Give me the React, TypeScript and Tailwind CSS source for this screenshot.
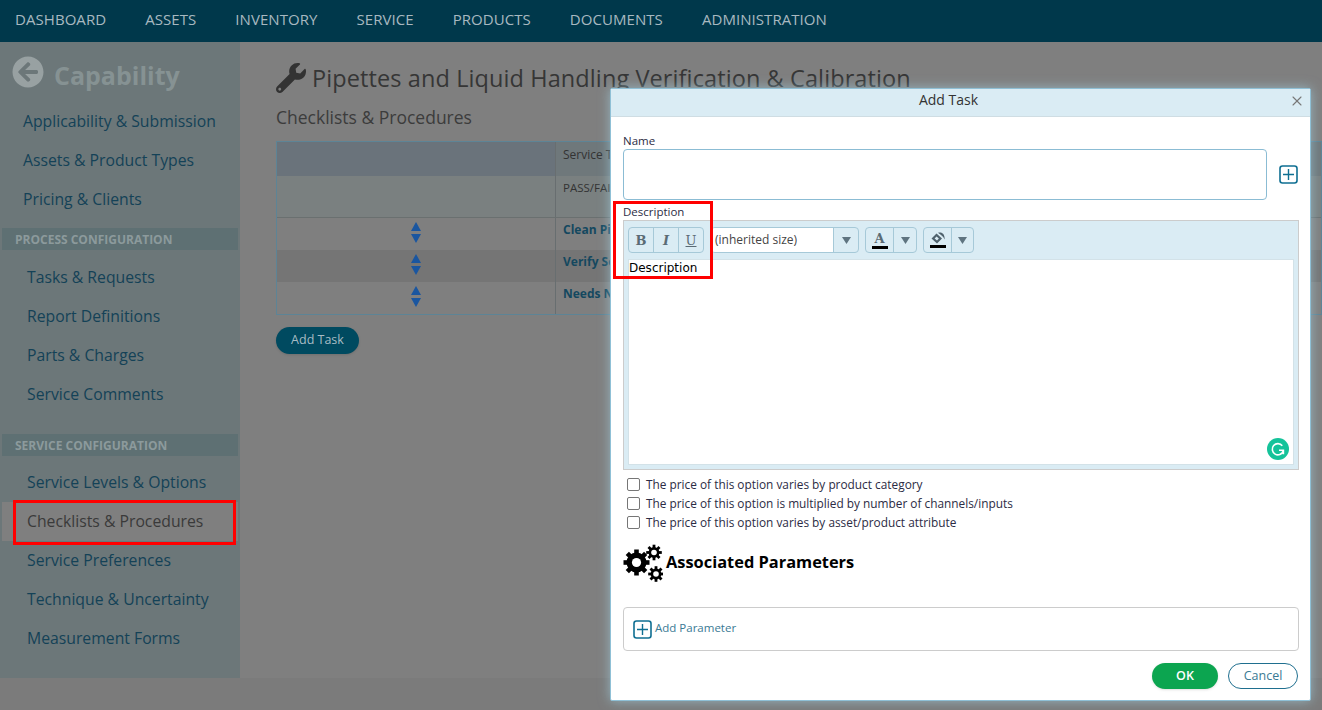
import React from 'react';
import { FaWrench, FaArrowCircleLeft } from 'react-icons/fa';
import { X } from 'lucide-react';

const navItems = ['DASHBOARD', 'ASSETS', 'INVENTORY', 'SERVICE', 'PRODUCTS', 'DOCUMENTS', 'ADMINISTRATION'];

const SideLink = ({ label, indent = false, active = false }: { label: string; indent?: boolean; active?: boolean }) => (
  <div
    className={`h-[39px] flex items-center text-[15.75px] ${indent ? 'pl-[27px]' : 'pl-[23px]'} ${
      active ? 'bg-[#7f7f7f] text-[#3a3a3a] mx-[2px] !pl-[25px]' : 'text-[#144257]'
    }`}
  >
    {label}
  </div>
);

const SectionTitle = ({ label }: { label: string }) => (
  <div className="h-[22px] mx-[2px] pl-[13px] pt-[1px] flex items-center bg-[#5e7073] text-[#8c9a9c] font-bold text-[12px]">{label}</div>
);

const SortArrows = () => (
  <svg width="10" height="21" viewBox="0 0 10 21" className="text-[#1a56a0]">
    <polygon points="5,0 10,9 0,9" fill="currentColor" />
    <polygon points="0,12 10,12 5,21" fill="currentColor" />
  </svg>
);

const PlusBox = () => (
  <svg width="19" height="19" viewBox="0 0 19 19" fill="none" className="shrink-0">
    <rect x="1" y="1" width="17" height="17" rx="2.5" stroke="#0f6f92" strokeWidth="1.6" />
    <path d="M9.5 4v11M4 9.5h11" stroke="#0f6f92" strokeWidth="1.4" />
  </svg>
);

const Caret = () => (
  <svg width="9" height="7" viewBox="0 0 9 7">
    <polygon points="0,0 9,0 4.5,7" fill="#5f7480" />
  </svg>
);

const PriceOption = ({ label }: { label: string }) => (
  <label className="h-[19px] flex items-center pl-[4px] gap-[6px] text-[11.85px] text-[#2c2c44]">
    <span className="w-[13px] h-[13px] rounded-[2px] border border-[#767676] bg-white" />
    <span className="pt-[1px]">{label}</span>
  </label>
);

const Gear = ({ cx, cy, r, hole, tooth, out }: { cx: number; cy: number; r: number; hole: number; tooth: number; out: number }) => (
  <g transform={`translate(${cx} ${cy})`}>
    {[0, 45, 90, 135, 180, 225, 270, 315].map((a) => (
      <rect key={a} x={-tooth / 2} y={-out} width={tooth} height={out} fill="#000000" transform={`rotate(${a})`} />
    ))}
    <circle r={(r + hole) / 2} fill="none" stroke="#000000" strokeWidth={r - hole} />
    <circle r={hole} fill="#ffffff" />
  </g>
);

const CogsIcon = () => (
  <svg width="40" height="38" viewBox="0 0 40 38" className="shrink-0">
    <Gear cx={13.5} cy={18.5} r={10} hole={4.6} tooth={4.6} out={13} />
    <Gear cx={31} cy={8.5} r={5.4} hole={2.8} tooth={2.8} out={7.8} />
    <Gear cx={33} cy={30} r={5.4} hole={2.8} tooth={2.8} out={7.8} />
  </svg>
);

export default function App() {
  return (
    <div className="relative w-[1322px] h-[710px] overflow-hidden bg-[#7b7b7b] font-['Open_Sans',sans-serif]">
      <nav className="h-[42px] bg-[#00384b] flex items-center pl-[15px] pb-[3px] gap-[39px] tracking-[0.06px] text-[#a8b8c0] text-[15px]">
        {navItems.map((item) => (
          <span key={item}>{item}</span>
        ))}
      </nav>

      <div className="flex h-[636px] bg-[#7f7f7f]">
        <aside className="w-[240px] shrink-0 bg-[#6c7779]">
          <div className="h-[60px] pl-[12px] pt-[14px] flex items-start gap-[10px] text-[#98a1a2]">
            <FaArrowCircleLeft size={32} />
            <span className="font-bold text-[25px] leading-[38px] text-[#869293]">Capability</span>
          </div>
          <SideLink label="Applicability & Submission" />
          <SideLink label="Assets & Product Types" />
          <SideLink label="Pricing & Clients" />
          <div className="h-[9px]" />
          <SectionTitle label="PROCESS CONFIGURATION" />
          <div className="h-[8px]" />
          <SideLink label="Tasks & Requests" indent />
          <SideLink label="Report Definitions" indent />
          <SideLink label="Parts & Charges" indent />
          <SideLink label="Service Comments" indent />
          <div className="h-[20px]" />
          <SectionTitle label="SERVICE CONFIGURATION" />
          <div className="h-[7px]" />
          <SideLink label="Service Levels & Options" indent />
          <SideLink label="Checklists & Procedures" indent active />
          <SideLink label="Service Preferences" indent />
          <SideLink label="Technique & Uncertainty" indent />
          <SideLink label="Measurement Forms" indent />
        </aside>

        <main className="flex-1 pl-[36px] pt-[19px] min-w-0">
          <h1 className="flex items-center gap-[6px] h-[34px] text-[23.5px] text-[#363636] tracking-[0.1px] whitespace-nowrap">
            <FaWrench size={30} className="text-[#333333]" />
            <span className="pt-[2px]">Pipettes and Liquid Handling Verification &amp; Calibration</span>
          </h1>
          <h2 className="mt-[8px] h-[27px] pt-[1px] flex items-center text-[17.5px] text-[#3c3c3c]">Checklists &amp; Procedures</h2>
          <div className="mt-[11px] border border-[#5d8496] text-[12px] text-[#333333]">
            <div className="flex h-[34px] bg-[#6a737b]">
              <div className="w-[279px] border-r border-[#686e70]" />
              <div className="pl-[7px] pt-[4px] bg-[#6f787b] flex-1">Service Type</div>
            </div>
            <div className="flex h-[42px] bg-[#7a8080] border-b border-[#6a7070]">
              <div className="w-[279px] border-r border-[#686e70]" />
              <div className="pl-[7px] pt-[3px] text-[11.5px]">PASS/FAIL</div>
            </div>
            {['Clean Pipette', 'Verify Settings', 'Needs Notes'].map((task, i) => (
              <div key={task} className={`flex h-[32px] ${i === 1 ? 'bg-[#757575]' : 'bg-[#7f7f7f]'}`}>
                <div className="w-[279px] border-r border-[#686e70] flex justify-center pt-[4px]">
                  <SortArrows />
                </div>
                <div className="pl-[7px] pt-[3px] font-bold text-[#14485f]">{task}</div>
              </div>
            ))}
          </div>
          <button className="mt-[12px] w-[83px] h-[27px] rounded-full bg-[#004a60] text-[#a8bcc4] text-[12.5px] font-medium shadow-sm">Add Task</button>
        </main>
      </div>

      {/* dialog */}
      <div className="absolute left-[610px] top-[88px] w-[701px] h-[613px] bg-white border border-[#8fc0d6] rounded-[2px] shadow-[0_0_12px_rgba(170,225,245,0.55)]">
        <div className="relative h-[28px] bg-[#daecf4] border-b border-[#cfdde3] pr-[24px] pb-[6px] flex items-center justify-center text-[14px] text-[#333333]">
          Add Task
          <X size={16} strokeWidth={1.6} className="absolute right-[5px] top-[4px] text-[#777777]" />
        </div>

        <div className="pl-[12px] pr-[11px]">
          <div className="mt-[17px] h-[14px] leading-[14px] text-[11.5px] text-[#2c2c44]">Name</div>
          <div className="mt-[1px] flex items-center gap-[12px]">
            <div className="w-[644px] h-[51px] bg-white border border-[#8bbcd4] rounded-[4px]" />
            <PlusBox />
          </div>

          <div className="mt-[5px] h-[14px] leading-[14px] text-[11.5px] text-[#2c2c44]">Description</div>
          <div className="mt-[1px] relative h-[250px] bg-[#daecf4] border border-[#cccccc] px-[4px] pt-[6px]">
            <div className="flex h-[26px] text-[#5a6b75] leading-none">
              <div className="w-[76px] flex rounded-[4px] border border-[#a6c9d8] overflow-hidden font-['DejaVu_Serif',serif] text-[13px]">
                <span className="flex-1 flex items-center justify-center font-bold">B</span>
                <span className="flex-1 flex items-center justify-center italic font-bold border-l border-[#a6c9d8]">I</span>
                <span className="flex-1 flex items-center justify-center underline border-l border-[#a6c9d8]">U</span>
              </div>
              <div className="ml-[7px] w-[148px] flex rounded-[4px] border border-[#a6c9d8] overflow-hidden">
                <span className="flex-1 bg-white text-[12px] text-[#444444] flex items-center pl-[3px]">(inherited size)</span>
                <span className="w-[25px] border-l border-[#a6c9d8] flex items-center justify-center">
                  <Caret />
                </span>
              </div>
              <div className="ml-[6px] w-[52px] flex rounded-[4px] border border-[#a6c9d8] overflow-hidden">
                <span className="w-[27px] flex flex-col items-center justify-center font-['DejaVu_Serif',serif] font-bold text-[13px] leading-[15px]">
                  A
                  <span className="w-[16px] h-[3px] bg-black" />
                </span>
                <span className="flex-1 border-l border-[#a6c9d8] flex items-center justify-center">
                  <Caret />
                </span>
              </div>
              <div className="ml-[6px] w-[51px] flex rounded-[4px] border border-[#a6c9d8] overflow-hidden">
                <span className="w-[27px] flex flex-col items-center justify-center">
                  <svg width="14" height="12" viewBox="0 0 14 12">
                    <path d="M5.5 1.5 11 6.5 6 11.5 0.5 6.5Z M5.5 4.6 3.6 6.5 6 8.6 7.9 6.6Z" fill="#4f626d" fillRule="evenodd" />
                    <path d="M7 .8C11 -.6 14 2 13.6 7.5 12.4 4.8 10.6 3.2 7 .8Z" fill="#4f626d" />
                  </svg>
                  <span className="w-[16px] h-[3px] bg-black mt-[1px]" />
                </span>
                <span className="flex-1 border-l border-[#a6c9d8] flex items-center justify-center">
                  <Caret />
                </span>
              </div>
            </div>
            <div className="mt-[6px] h-[206px] bg-white border border-[#d3e2e8] pt-[1px] font-['DejaVu_Sans',sans-serif] text-[12px] leading-[14px] text-black">
              Description
            </div>
            <svg width="22" height="22" viewBox="0 0 22 22" className="absolute right-[9px] bottom-[9px]">
              <circle cx="11" cy="11" r="11" fill="#15c39a" />
              <path d="M15.3 7.8A5.6 5.6 0 1 0 16.2 13M12 12.2h4.4v4" fill="none" stroke="#ffffff" strokeWidth="1.6" />
            </svg>
          </div>

          <div className="mt-[5px]">
            <PriceOption label="The price of this option varies by product category" />
            <PriceOption label="The price of this option is multiplied by number of channels/inputs" />
            <PriceOption label="The price of this option varies by asset/product attribute" />
          </div>

          <div className="mt-[11px] h-[40px] flex items-center gap-[3px] text-black font-bold text-[16.4px]">
            <CogsIcon />
            <span className="pb-[1px]">Associated Parameters</span>
          </div>

          <div className="mt-[24px] h-[44px] border border-[#cccccc] rounded-[4px] flex items-center pl-[9px] gap-[3px] text-[11.5px] text-[#3a7a94]">
            <PlusBox />
            <span className="pb-[3px]">Add Parameter</span>
          </div>

          <div className="mt-[12px] flex justify-end gap-[10px] pr-[1px]">
            <button className="w-[66px] h-[26px] rounded-full bg-[#0ca550] text-white font-semibold text-[12.5px] shadow-sm">OK</button>
            <button className="w-[70px] h-[26px] rounded-full bg-white border border-[#1f6f8f] text-[#3a7a94] text-[12.5px]">Cancel</button>
          </div>
        </div>
      </div>

      {/* red callouts from the doc screenshot */}
      <div className="absolute left-[13px] top-[500px] w-[223px] h-[45px] border-[3px] border-[#ff0000]" />
      <div className="absolute left-[613px] top-[201px] w-[100px] h-[78px] border-[3px] border-[#ff0000]" />
    </div>
  );
}
